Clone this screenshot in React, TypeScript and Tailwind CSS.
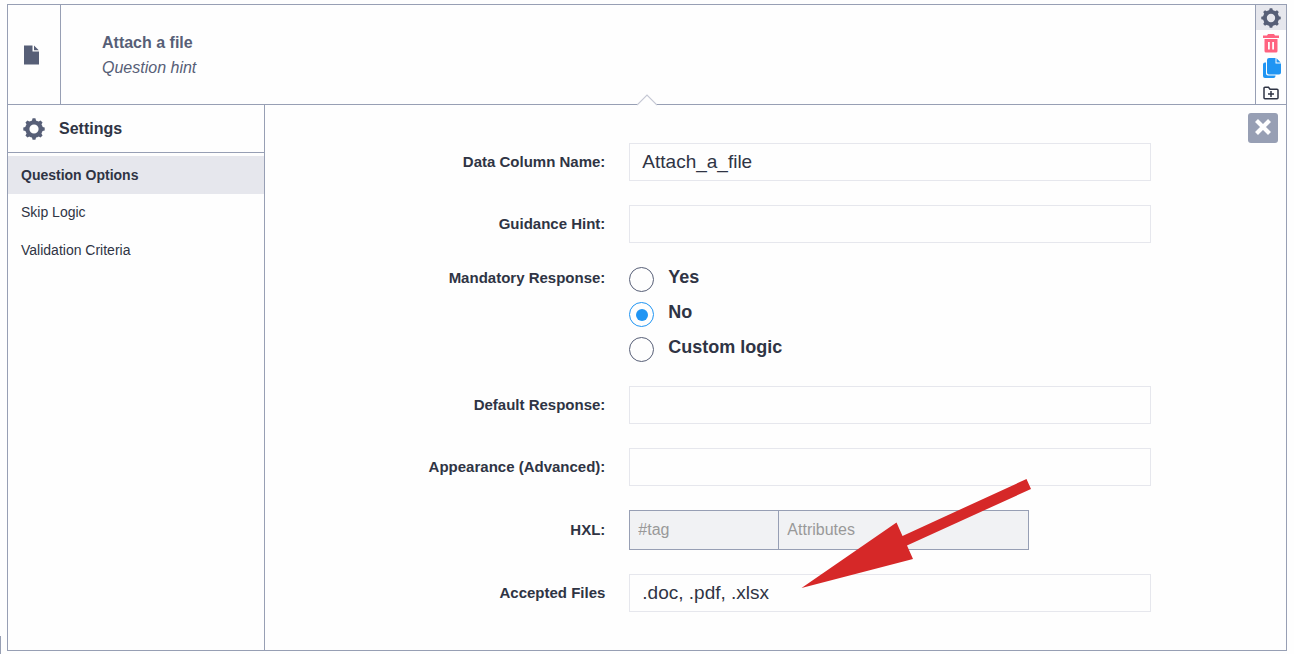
import { useState } from "react";
import type { ReactNode } from "react";

const teeth = [0, 45, 90, 135, 180, 225, 270, 315];

function GearIcon({ className }: { className: string }) {
  return (
    <svg viewBox="0 0 22 22" className={className} fill="currentColor" aria-hidden="true">
      <circle cx="11" cy="11" r="6.700" fill="none" stroke="currentColor" strokeWidth="4.200" />
      {teeth.map((angle) => (
        <path key={angle} d="M8.700 3.500L9.600 0.300h2.800l0.900 3.200z" transform={`rotate(${angle} 11 11)`} />
      ))}
    </svg>
  );
}

function FileIcon({ className }: { className: string }) {
  return (
    <svg viewBox="0 0 15 20" className={className} fill="currentColor" aria-hidden="true">
      <path d="M0 0.500h8.500v6h6.500v13h-15zM10 0.500l4.800 4.700h-4.800z" />
    </svg>
  );
}

function TrashIcon() {
  return (
    <svg viewBox="0 0 18 20" className="h-5 w-[18px]" fill="currentColor" aria-hidden="true">
      <path
        fillRule="evenodd"
        d="M6 1h6l1 1.500h4v2.500h-16V2.500h4zM2.500 6h13v12a1.500 1.500 0 0 1-1.500 1.500h-10a1.500 1.500 0 0 1-1.500-1.500zM6 9v7.500h1.800v-7.500zM10.200 9v7.500h1.800v-7.500z"
      />
    </svg>
  );
}

function CopyIcon() {
  return (
    <svg viewBox="0 0 18 20" className="h-5 w-[18px]" fill="currentColor" aria-hidden="true">
      <path d="M6 0h6.500v5.500h5.500v9a2 2 0 0 1-2 2h-10a2 2 0 0 1-2-2v-12.500a2 2 0 0 1 2-2zM13.500 0.300l4.200 4.200h-4.200z" />
      <path d="M0 6.500a2 2 0 0 1 2-2h1v11a2 2 0 0 0 2 2h7.500v0.500a2 2 0 0 1-2 2h-8.500a2 2 0 0 1-2-2z" />
    </svg>
  );
}

function FolderPlusIcon() {
  return (
    <svg viewBox="0 0 16 14" className="h-[14px] w-4" fill="none" stroke="currentColor" strokeWidth="1.500" aria-hidden="true">
      <path d="M1 11.800v-9.600a1 1 0 0 1 1-1h3.500l1.500 2h7a1 1 0 0 1 1 1v7.600a1 1 0 0 1-1 1h-12a1 1 0 0 1-1-1zM8 5v6M5 8h6" />
    </svg>
  );
}

function Row({ label, htmlFor, children }: { label: string; htmlFor: string; children: ReactNode }) {
  return (
    <div className="flex items-center gap-6">
      <label htmlFor={htmlFor} className="w-1/3 shrink-0 text-right text-[15px] leading-[22px] font-bold">
        {label}
      </label>
      <div className="min-w-0 flex-1 pr-[135px]">{children}</div>
    </div>
  );
}

function TextField({ id, label, value = "" }: { id: string; label: string; value?: string }) {
  return (
    <Row label={label} htmlFor={id}>
      <input
        id={id}
        type="text"
        defaultValue={value}
        className="block h-[38px] w-full border border-[#e6e7ed] bg-transparent px-3 text-[19px] outline-none"
      />
    </Row>
  );
}

const tabs = ["Question Options", "Skip Logic", "Validation Criteria"];
const choices = ["Yes", "No", "Custom logic"];

export default function App() {
  const [tab, setTab] = useState(tabs[0]);
  const [mandatory, setMandatory] = useState("No");

  return (
    <div className="relative min-h-screen bg-[#fefefe] px-[7px] pt-1 font-['Liberation_Sans',Arial,sans-serif] text-[#2f3444]">
      <main className="border border-[#979fb4]">
        <header className="flex h-[100px] border-b border-[#979fb4] text-[#575f77]">
          <div className="flex w-[53px] items-center justify-center border-r border-[#979fb4] pr-1.5">
            <FileIcon className="h-5 w-[15px]" />
          </div>
          <div className="flex-1 pt-[25px] pl-[41px] text-base leading-[25px]">
            <h1 className="font-bold">Attach a file</h1>
            <p className="italic">Question hint</p>
          </div>
          <div className="flex w-[31px] flex-col border-l border-[#979fb4]">
            <button type="button" aria-label="Settings" className="flex h-[25px] items-center justify-center bg-[#e6e7ed]">
              <GearIcon className="size-5" />
            </button>
            <button type="button" aria-label="Delete question" className="flex h-[25px] items-center justify-center text-[#ff6380]">
              <TrashIcon />
            </button>
            <button type="button" aria-label="Duplicate question" className="flex h-[25px] items-center justify-center pl-0.5 text-[#2095f3]">
              <CopyIcon />
            </button>
            <button type="button" aria-label="Add question to library" className="flex h-6 items-center justify-center pt-0.5 text-[#2f3444]">
              <FolderPlusIcon />
            </button>
          </div>
        </header>

        <div className="relative flex">
          <svg viewBox="0 0 20 12" className="absolute -top-[11px] left-1/2 h-3 w-5 -translate-x-1/2" aria-hidden="true">
            <path d="M0 11L10 1L20 11V12H0z" fill="#fefefe" />
            <path d="M0 11L10 1L20 11" fill="none" stroke="#c5c8d4" strokeWidth="1.200" />
          </svg>

          <aside className="w-[257px] shrink-0 border-r border-[#979fb4]">
            <div className="mb-[3px] flex h-12 items-center gap-[14px] border-b border-[#979fb4] pl-[15px]">
              <GearIcon className="size-[22px] text-[#575f77]" />
              <h2 className="text-base font-bold">Settings</h2>
            </div>
            <nav className="flex flex-col">
              {tabs.map((name) => (
                <button
                  key={name}
                  type="button"
                  onClick={() => setTab(name)}
                  className={
                    name === tab
                      ? "h-[38px] bg-[#e6e7ed] pl-[13px] text-left text-sm font-bold"
                      : "h-[38px] pb-0.5 pl-[13px] text-left text-sm"
                  }
                >
                  {name}
                </button>
              ))}
            </nav>
          </aside>

          <form className="relative flex flex-1 flex-col gap-6 pt-[38px] pb-[38px]">
            <button
              type="button"
              aria-label="Close settings"
              className="absolute top-2 right-2 flex size-[30px] items-center justify-center rounded-[3px] bg-[#979fb4] pb-0.5 text-white"
            >
              <svg viewBox="0 0 16 16" className="size-4" fill="none" stroke="currentColor" strokeWidth="4.200" aria-hidden="true">
                <path d="M1.500 1.500l13 13M14.500 1.500l-13 13" />
              </svg>
            </button>

            <TextField id="column" label="Data Column Name:" value="Attach_a_file" />
            <TextField id="hint" label="Guidance Hint:" />

            <fieldset className="flex items-start gap-6" aria-labelledby="mandatory">
              <div id="mandatory" className="w-1/3 shrink-0 text-right text-[15px] leading-[22px] font-bold">
                Mandatory Response:
              </div>
              <div className="flex flex-col gap-[10px]">
                {choices.map((name) => (
                  <label key={name} className="flex h-[25px] items-start gap-[14px] text-lg leading-5 font-bold">
                    <input
                      type="radio"
                      name="mandatory"
                      checked={mandatory === name}
                      onChange={() => setMandatory(name)}
                      className="grid size-[25px] appearance-none place-items-center rounded-full border border-[#575f77] before:size-3 before:rounded-full checked:border-[#2095f3] checked:before:bg-[#2095f3]"
                    />
                    {name}
                  </label>
                ))}
              </div>
            </fieldset>

            <TextField id="default" label="Default Response:" />
            <TextField id="appearance" label="Appearance (Advanced):" />

            <Row label="HXL:" htmlFor="tag">
              <div className="flex h-10 w-[400px] border border-[#979fb4] bg-[#f1f2f4] text-base">
                <input
                  id="tag"
                  placeholder="#tag"
                  className="w-[149px] border-r border-[#979fb4] px-2 outline-none placeholder:text-[#999999]"
                />
                <input
                  aria-label="Attributes"
                  placeholder="Attributes"
                  className="min-w-0 flex-1 px-2 outline-none placeholder:text-[#999999]"
                />
              </div>
            </Row>

            <TextField id="accepted" label="Accepted Files" value=".doc, .pdf, .xlsx" />

            <svg
              viewBox="0 0 230 110"
              className="pointer-events-none absolute right-[255px] bottom-[61px] h-[110px] w-[230px]"
              fill="#d62828"
              aria-hidden="true"
            >
              <path d="M0.500 109L95.500 43.500L101.500 57L225.500 0L230 10L106 66.500L112 80z" />
            </svg>
          </form>
        </div>
      </main>
      <div className="absolute bottom-0 left-0 h-[18px] w-px bg-[#979fb4]" />
    </div>
  );
}
